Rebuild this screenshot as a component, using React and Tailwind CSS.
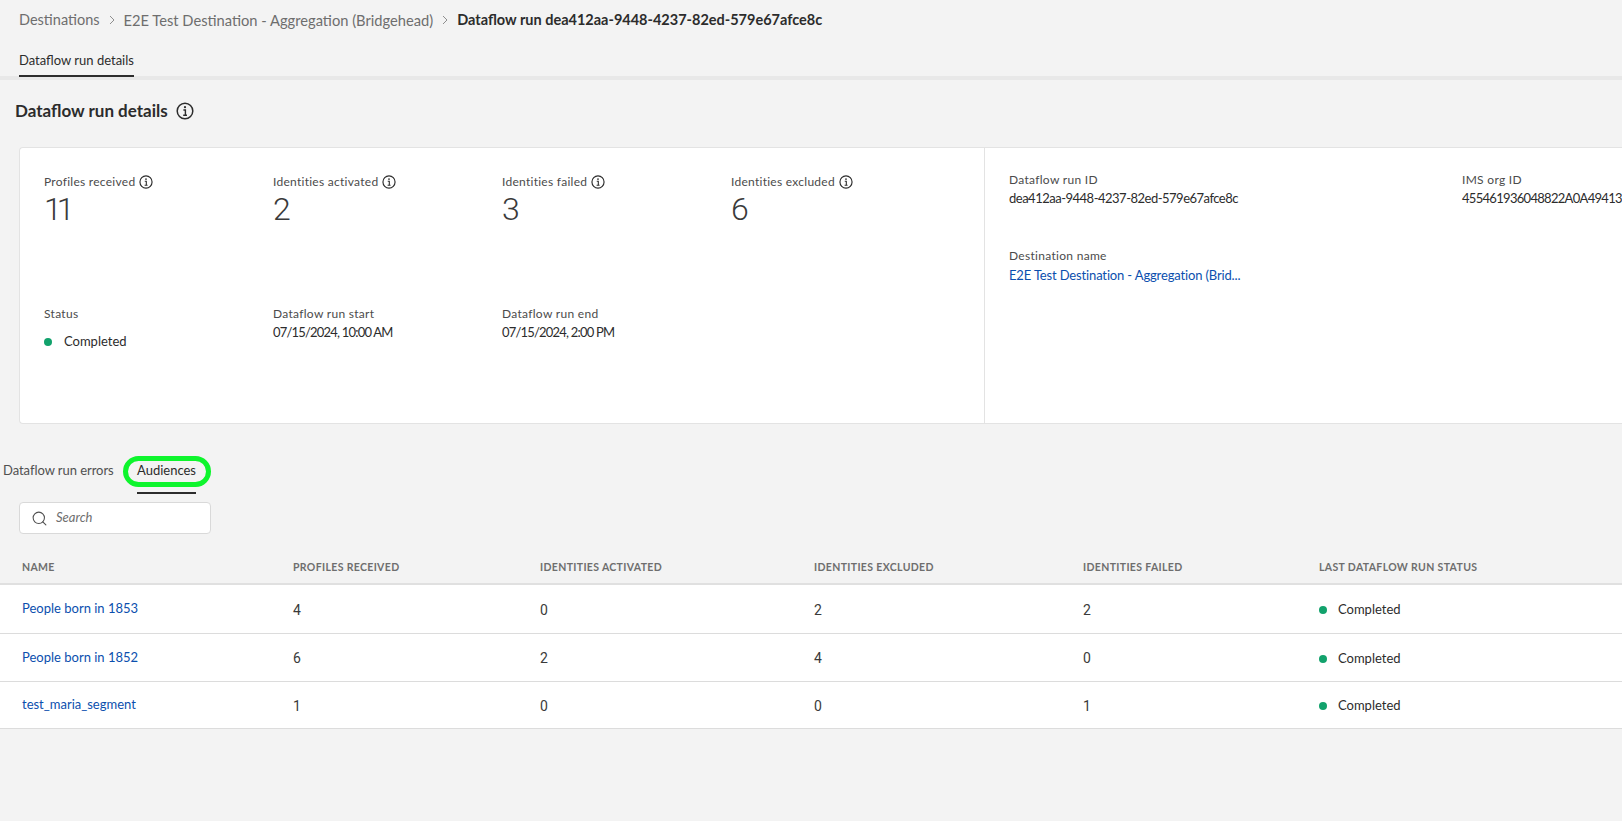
import { Search } from 'lucide-react';

const font = "font-['Lato','Liberation_Sans',sans-serif]";
const digits = "font-['Roboto','Liberation_Sans',sans-serif]";

function InfoIcon({ size = 14 }) {
  return (
    <svg width={size} height={size} viewBox="0 0 18 18" fill="none" className="shrink-0 text-[#2c2c2c]">
      <circle cx="9" cy="9" r="7.8" stroke="currentColor" strokeWidth="1.5" />
      <circle cx="9" cy="5.2" r="1.1" fill="currentColor" />
      <path d="M7.4 8h2v5M7.2 13.2h3.8" stroke="currentColor" strokeWidth="1.4" />
    </svg>
  );
}

function Chevron() {
  return (
    <svg width="8" height="10" viewBox="0 0 8 10" fill="none" className="shrink-0 text-[#8e8e8e]">
      <path d="M2 1l4 4-4 4" stroke="currentColor" strokeWidth="1" />
    </svg>
  );
}

function Label({ children }) {
  return <div className="h-[16px] leading-[16px] text-[12px] tracking-[0.3px] text-[#4b4b4b]">{children}</div>;
}

function Stat({ label, value }) {
  return (
    <div className="w-[229px]">
      <div className="flex items-center gap-[4px] h-[16px] text-[12px] tracking-[0.27px] text-[#4b4b4b]">
        {label}
        <InfoIcon />
      </div>
      <div className={`${digits} mt-[3px] h-[32px] leading-[32px] text-[32px] font-light tracking-[-5px] text-[#3a3a3a]`}>{value}</div>
    </div>
  );
}

function Value({ children, className = 'text-[#2c2c2c] tracking-[-0.5px]' }) {
  return <div className={`h-[20px] leading-[20px] text-[13px] whitespace-nowrap ${className}`}>{children}</div>;
}

function Status({ gap = 'gap-[12px]' }) {
  return (
    <div className={`flex items-center ${gap} text-[13px] text-[#2c2c2c]`}>
      <span className="w-[8px] h-[8px] rounded-full bg-[#12a26c]" />
      Completed
    </div>
  );
}

const rows = [
  { name: 'People born in 1853', profiles: 4, activated: 0, excluded: 2, failed: 2, h: 'h-[49px]' },
  { name: 'People born in 1852', profiles: 6, activated: 2, excluded: 4, failed: 0, h: 'h-[48px]' },
  { name: 'test_maria_segment', profiles: 1, activated: 0, excluded: 0, failed: 1, h: 'h-[47px]' },
];

const gridCols = 'grid grid-cols-[271px_247px_274px_269px_236px_1fr]';

export default function App() {
  return (
    <div className={`${font} w-[1622px] h-[821px] overflow-hidden bg-[#f3f3f3] text-[#2c2c2c]`}>
      <div className="flex items-center h-[40px] pl-[19px] text-[14.5px] text-[#6e6e6e]">
        <span>Destinations</span>
        <span className="mx-[8px]"><Chevron /></span>
        <span className="text-[14.7px]">E2E Test Destination - Aggregation (Bridgehead)</span>
        <span className="mx-[8px]"><Chevron /></span>
        <span className="font-bold text-[#2c2c2c] text-[14.5px]">Dataflow run dea412aa-9448-4237-82ed-579e67afce8c</span>
      </div>

      <div className="h-[40px] border-b-[4px] border-[#e8e8e8] pl-[19px]">
        <div className="w-fit h-[37px] pt-[10px] border-b-[2px] border-[#2c2c2c] text-[13px] leading-[20px]">
          Dataflow run details
        </div>
      </div>

      <div className="flex items-center gap-[8px] h-[31px] mt-[15px] pl-[15px] text-[17px] font-bold text-[#2c2c2c]">
        Dataflow run details
        <InfoIcon size={18} />
      </div>

      <div className="flex h-[277px] ml-[19px] mt-[21px] bg-white border border-r-0 border-[#e3e3e3] rounded-l-[4px]">
        <div className="w-[965px] shrink-0 border-r border-[#e3e3e3] pl-[24px] pt-[26px]">
          <div className="flex h-[132px]">
            <Stat label="Profiles received" value="11" />
            <Stat label="Identities activated" value="2" />
            <Stat label="Identities failed" value="3" />
            <Stat label="Identities excluded" value="6" />
          </div>
          <div className="flex">
            <div className="w-[229px]">
              <Label>Status</Label>
              <div className="mt-[10px]"><Status /></div>
            </div>
            <div className="w-[229px]">
              <Label>Dataflow run start</Label>
              <Value className="text-[#2c2c2c] tracking-[-0.8px]">07/15/2024, 10:00 AM</Value>
            </div>
            <div className="w-[229px]">
              <Label>Dataflow run end</Label>
              <Value className="text-[#2c2c2c] tracking-[-0.8px]">07/15/2024, 2:00 PM</Value>
            </div>
          </div>
        </div>
        <div className="flex-1 pl-[24px] pt-[24px] overflow-hidden">
          <div className="flex">
            <div className="w-[453px] shrink-0">
              <Label>Dataflow run ID</Label>
              <Value>dea412aa-9448-4237-82ed-579e67afce8c</Value>
            </div>
            <div className="shrink-0">
              <Label>IMS org ID</Label>
              <Value className="text-[#2c2c2c] tracking-[-0.7px]">455461936048822A0A49413</Value>
            </div>
          </div>
          <div className="mt-[40px]">
            <Label>Destination name</Label>
            <div className="mt-[1px]">
              <Value className="text-[#0b4fae] tracking-[-0.15px]">E2E Test Destination - Aggregation (Brid...</Value>
            </div>
          </div>
        </div>
      </div>

      <div className="flex items-center h-[30px] mt-[32px] pl-[3px] text-[13px]">
        <span className="text-[#505050] w-[134px] tracking-[-0.05px]">Dataflow run errors</span>
        <span className="relative text-[#2c2c2c]">
          Audiences
          <span className="absolute -left-[14px] -right-[15px] -top-[5px] -bottom-[6px] border-[5px] border-[#0ef52d] rounded-full" />
          <span className="absolute left-0 right-0 top-[31px] h-[2px] bg-[#2c2c2c]" />
        </span>
      </div>

      <div className="flex items-center gap-[8px] w-[192px] h-[32px] ml-[19px] mt-[16px] px-[11px] bg-white border border-[#d9d9d9] rounded-[4px]">
        <Search size={17} strokeWidth={1.5} className="text-[#505050]" />
        <span className="italic text-[13px] text-[#6e6e6e]">Search</span>
      </div>

      <div className={`${gridCols} items-center h-[51px] pl-[22px] border-b-[2px] border-[#e0e0e0] pt-[18px] text-[10.5px] font-bold tracking-[0.35px] text-[#6e6e6e]`}>
        <span>NAME</span>
        <span>PROFILES RECEIVED</span>
        <span>IDENTITIES ACTIVATED</span>
        <span>IDENTITIES EXCLUDED</span>
        <span>IDENTITIES FAILED</span>
        <span>LAST DATAFLOW RUN STATUS</span>
      </div>

      <div className="bg-white">
        {rows.map((r) => (
          <div key={r.name} className={`${gridCols} ${r.h} items-center pl-[22px] border-b border-[#dcdcdc] text-[14px] text-[#3a3a3a]`}>
            <span className="text-[13px] text-[#0b4fae]">{r.name}</span>
            <span className={`${digits} pt-[2px]`}>{r.profiles}</span>
            <span className={`${digits} pt-[2px]`}>{r.activated}</span>
            <span className={`${digits} pt-[2px]`}>{r.excluded}</span>
            <span className={`${digits} pt-[2px]`}>{r.failed}</span>
            <div className="pt-[2px]"><Status gap="gap-[11px]" /></div>
          </div>
        ))}
      </div>
    </div>
  );
}
